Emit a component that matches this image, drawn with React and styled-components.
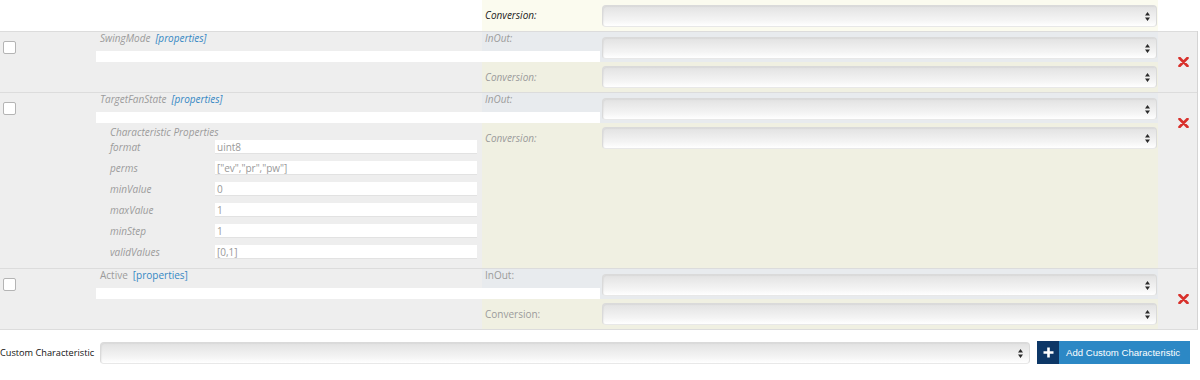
import React from "react"
import styled, { createGlobalStyle, css } from "styled-components"

const GlobalStyle = createGlobalStyle`
  body {
    margin: 0;
    background: #fff;
    font-family: "Open Sans", "DejaVu Sans", sans-serif;
    font-size: 10px;
    color: #999;
  }
`

const COLS = "96px 386px 118px 558px 39px"

const Page = styled.div`
  width: 1200px;
`

const TailRow = styled.div`
  display: grid;
  grid-template-columns: ${COLS};
  height: 31px;
`

const List = styled.div`
  width: 1197px;
  border-right: 1px solid #d4d4d4;
  border-bottom: 1px solid #dcdcdc;
`

const Row = styled.div`
  display: grid;
  grid-template-columns: ${COLS};
  grid-template-rows: 19px 11px auto;
  grid-template-areas:
    "check name inlabel inselect remove"
    "check bar bar inselect remove"
    "check props convlabel convselect remove";
  background: #eee;
  border-top: 1px solid #dcdcdc;
  font-style: ${p => (p.$italic ? "italic" : "normal")};
`

const CheckCell = styled.div`
  grid-area: check;
  padding: 9px 0 0 3px;
`

const Checkbox = styled.span`
  display: block;
  width: 11px;
  height: 11px;
  background: #fff;
  border: 1px solid #b4b4b4;
  border-radius: 2px;
`

const NameCell = styled.div`
  grid-area: name;
  padding-left: 4px;
  line-height: 12px;
  color: #9b9b9b;
`

const PropsLink = styled.a`
  color: #3588c4;
  margin-left: 5px;
  text-decoration: none;
`

const WhiteBar = styled.div`
  grid-area: bar;
  background: #fff;
`

const LabelCell = styled.div`
  grid-area: ${p => p.$area};
  padding-left: 3px;
  ${p =>
    p.$kind === "inout"
      ? css`
          background: #e8ebee;
          line-height: 12px;
        `
      : css`
          background: ${p.$light ? "#fbfbef" : "#f0f0e2"};
          line-height: 30px;
        `}
  color: ${p => (p.$dark ? "#222" : "#9b9b9b")};
  font-style: ${p => (p.$dark ? "italic" : "inherit")};
`

const SelectCell = styled.div`
  grid-area: ${p => p.$area};
  background: ${p => p.$bg};
  padding: ${p => p.$top}px 1px 0 2px;
`

const SelectWrap = styled.div`
  position: relative;
  width: ${p => p.$width || "100%"};
  height: 22px;
`

const NativeSelect = styled.select`
  appearance: none;
  -webkit-appearance: none;
  display: block;
  width: 100%;
  height: 22px;
  margin: 0;
  border: 1px solid #dadada;
  border-bottom-color: #e8e8e8;
  border-radius: 4px;
  background: linear-gradient(#e2e2e2, #f4f4f4 70%, #fff);
  box-shadow: inset 1px 1px 1px rgba(0, 0, 0, 0.04);
  outline: none;
`

const Arrows = styled.svg`
  position: absolute;
  right: 7px;
  top: 7px;
  pointer-events: none;
`

const RemoveCell = styled.div`
  grid-area: remove;
  display: flex;
  align-items: flex-start;
  justify-content: flex-end;
  padding: 25px 8px 0 0;
`

const PropsBlock = styled.div`
  grid-area: props;
  padding: 2px 4px 9px 14px;
  font-style: italic;
`

const PropsTitle = styled.div`
  line-height: 14px;
  margin-bottom: 1px;
  color: #9b9b9b;
`

const PropList = styled.div`
  display: grid;
  grid-template-columns: 105px 262px;
  row-gap: 7px;
`

const PropLabel = styled.div`
  line-height: 14px;
  color: #9b9b9b;
`

const PropInput = styled.input`
  box-sizing: border-box;
  height: 14px;
  padding: 0 2px;
  border: none;
  border-bottom: 1px solid #e2e2e2;
  background: #fff;
  font: normal 10px "Open Sans", sans-serif;
  color: #999;
  outline: none;
`

const Footer = styled.div`
  display: flex;
  align-items: center;
  margin-top: 11px;
`

const FooterLabel = styled.label`
  width: 100px;
  font-size: 9.2px;
  color: #111;
`

const AddButton = styled.button`
  display: flex;
  align-items: stretch;
  height: 23px;
  width: 153px;
  margin-left: 7px;
  padding: 0;
  border: none;
  background: #2c88c5;
  color: #fff;
  font: 9.6px "Liberation Sans", Arial, sans-serif;
  cursor: pointer;
`

const PlusBox = styled.span`
  width: 22px;
  background: #0d3767;
  display: flex;
  align-items: center;
  justify-content: center;
`

const ButtonText = styled.span`
  display: flex;
  align-items: center;
  padding-left: 7px;
  white-space: nowrap;
`

const ArrowIcon = () => (
  <Arrows width="5" height="9" viewBox="0 0 5 9">
    <path d="M2.5 0 L5 3.6 H0 Z M2.5 9 L5 5.4 H0 Z" fill="#2a2a2a" />
  </Arrows>
)

const Select = ({ width }) => (
  <SelectWrap $width={width}>
    <NativeSelect defaultValue="">
      <option value="" />
    </NativeSelect>
    <ArrowIcon />
  </SelectWrap>
)

const RemoveIcon = () => (
  <svg width="11" height="10" viewBox="0 0 11 10">
    <path d="M1.5 1 L9.5 9 M9.5 1 L1.5 9" stroke="#d8302b" strokeWidth="2.6" strokeLinecap="round" />
  </svg>
)

const PlusIcon = () => (
  <svg width="11" height="11" viewBox="0 0 11 11">
    <path d="M5.5 0.5 V10.5 M0.5 5.5 H10.5" stroke="#fff" strokeWidth="2.6" />
  </svg>
)

const characteristics = [
  { name: "SwingMode", italic: true },
  {
    name: "TargetFanState",
    italic: true,
    props: [
      ["format", "uint8"],
      ["perms", '["ev","pr","pw"]'],
      ["minValue", "0"],
      ["maxValue", "1"],
      ["minStep", "1"],
      ["validValues", "[0,1]"],
    ],
  },
  { name: "Active", italic: false },
]

const Characteristic = ({ name, italic, props }) => (
  <Row $italic={italic}>
    <CheckCell>
      <Checkbox />
    </CheckCell>
    <NameCell>
      {name}
      <PropsLink href="#">[properties]</PropsLink>
    </NameCell>
    <LabelCell $area="inlabel" $kind="inout">InOut:</LabelCell>
    <SelectCell $area="inselect" $bg="#e8ebee" $top={5}>
      <Select />
    </SelectCell>
    <WhiteBar />
    <PropsBlock>
      {props && (
        <>
          <PropsTitle>Characteristic Properties</PropsTitle>
          <PropList>
            {props.map(([k, v]) => (
              <React.Fragment key={k}>
                <PropLabel>{k}</PropLabel>
                <PropInput defaultValue={v} />
              </React.Fragment>
            ))}
          </PropList>
        </>
      )}
    </PropsBlock>
    <LabelCell $area="convlabel" $kind="conv">Conversion:</LabelCell>
    <SelectCell $area="convselect" $bg="#f0f0e2" $top={4}>
      <Select />
    </SelectCell>
    <RemoveCell>
      <RemoveIcon />
    </RemoveCell>
  </Row>
)

const App = () => (
  <Page>
    <GlobalStyle />
    <TailRow>
      <div />
      <div />
      <LabelCell $area="auto" $kind="conv" $light $dark>Conversion:</LabelCell>
      <SelectCell $area="auto" $bg="#fbfbef" $top={5}>
        <Select />
      </SelectCell>
      <div />
    </TailRow>
    <List>
      {characteristics.map(c => (
        <Characteristic key={c.name} {...c} />
      ))}
    </List>
    <Footer>
      <FooterLabel>Custom Characteristic</FooterLabel>
      <Select width="930px" />
      <AddButton>
        <PlusBox>
          <PlusIcon />
        </PlusBox>
        <ButtonText>Add Custom Characteristic</ButtonText>
      </AddButton>
    </Footer>
  </Page>
)

export default App
